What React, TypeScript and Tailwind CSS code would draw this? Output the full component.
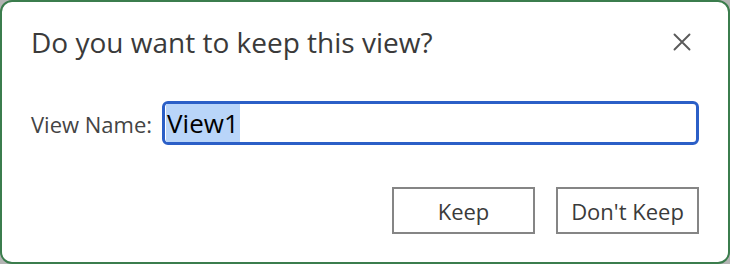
import React from "react";

export default function App() {
  return (
    <div className="w-[730px] h-[264px] bg-[#b4b4b4]" style={{ fontFamily: '"Open Sans", "Noto Sans", sans-serif' }}>
      <div className="w-full h-full bg-white border-2 border-[#3b7d4d] rounded-[12px] flex flex-col px-[29px]">
        {/* Header */}
        <div className="flex items-center justify-between pt-[23px]">
          <h1 className="text-[28px] leading-[34px] text-[#3a3a3a]">Do you want to keep this view?</h1>
          <button className="w-[18px] h-[18px] flex items-center justify-center text-[#5a5a5a] mr-[8px]">
            <svg width="18" height="18" viewBox="0 0 18 18" fill="none" stroke="currentColor" strokeWidth="1.9" strokeLinecap="round">
              <path d="M1.5 1.5 L16.5 16.5 M16.5 1.5 L1.5 16.5" />
            </svg>
          </button>
        </div>

        {/* View name row */}
        <div className="flex items-center mt-[42px]">
          <label className="text-[22px] text-[#444] mr-[10px] leading-none pt-[2px]">View Name:</label>
          <div className="flex-1 h-[44px] border-[3px] border-[#2b5fc7] rounded-[6px] flex items-center pl-[1px]">
            <span className="bg-[#b9d5f9] text-black text-[26px] leading-[38px] px-[1px]">View1</span>
          </div>
        </div>

        {/* Buttons */}
        <div className="flex justify-end gap-[21px] mt-[42px]">
          <button className="w-[143px] h-[47px] border-2 border-[#858585] text-[22px] text-[#3a3a3a] bg-white pt-[2px]">
            Keep
          </button>
          <button className="w-[143px] h-[47px] border-2 border-[#858585] text-[22px] text-[#3a3a3a] bg-white pt-[2px]">
            Don't Keep
          </button>
        </div>
      </div>
    </div>
  );
}
